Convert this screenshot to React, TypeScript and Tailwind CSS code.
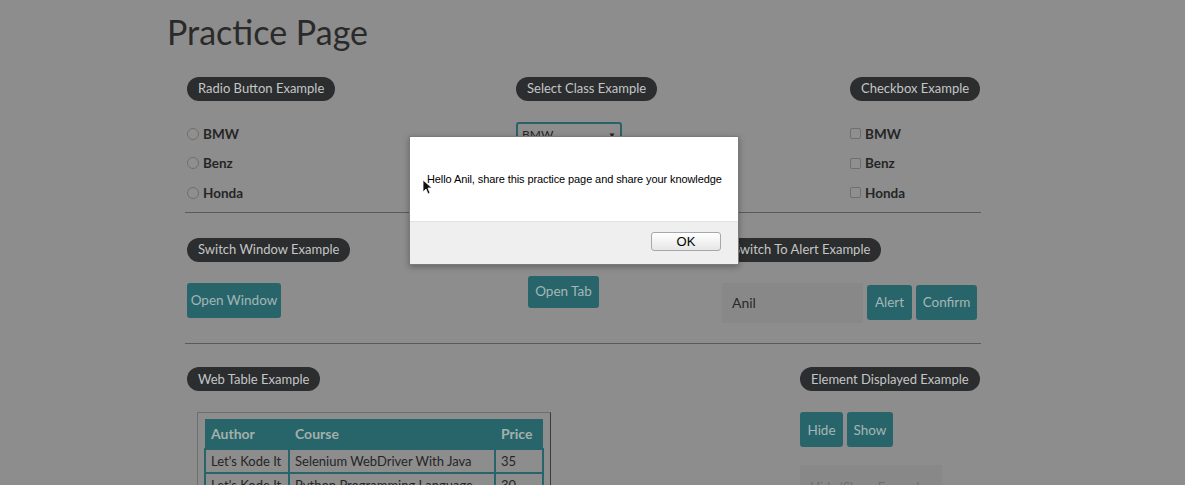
import React from "react";

function Legend({ children }: { children: React.ReactNode }) {
  return (
    <div className="inline-flex h-[24px] items-center whitespace-nowrap rounded-full bg-[#2b2d2f] px-[11px] text-[13px] text-[#c4c6c6]">
      {children}
    </div>
  );
}

function TealButton({ label, className }: { label: string; className: string }) {
  return (
    <div
      className={
        "flex items-center justify-center whitespace-nowrap rounded-[3px] bg-[#28656a] text-[13.5px] text-[#a4b6b6] " +
        className
      }
    >
      {label}
    </div>
  );
}

const cars = ["BMW", "Benz", "Honda"];

function App() {
  return (
    <div
      className="relative h-[485px] w-[1185px] overflow-hidden bg-[#8d8d8d] text-[#252525]"
      style={{ fontFamily: "Lato, 'Open Sans', sans-serif" }}
    >
      <h1 className="ml-[167px] pt-[10px] text-[34px] leading-[44px] text-[#2a2a2a]">
        Practice Page
      </h1>

      <div className="ml-[185px] w-[796px]">
        {/* row 1 */}
        <div className="flex pt-[21px] pb-[10px]">
          <div className="w-[331px] pl-[2px]">
            <Legend>Radio Button Example</Legend>
            <div className="mt-[24px] flex flex-col gap-[11.5px]">
              {cars.map((c) => (
                <div key={c} className="flex h-[18px] items-center gap-[4px]">
                  <span className="h-[12px] w-[12px] rounded-full border border-[#6f6f6f] bg-[#8f8f8f]" />
                  <span className="text-[13.5px] font-bold">{c}</span>
                </div>
              ))}
            </div>
          </div>
          <div className="w-[334px]">
            <Legend>Select Class Example</Legend>
            <div className="mt-[21px] flex h-[26px] w-[106px] items-center justify-between rounded-[3px] border-2 border-[#2b6266] px-[4px] text-[12px]">
              <span>BMW</span>
              <span className="text-[8px]">▼</span>
            </div>
          </div>
          <div className="flex-1">
            <Legend>Checkbox Example</Legend>
            <div className="mt-[24px] flex flex-col gap-[11.5px]">
              {cars.map((c) => (
                <div key={c} className="flex h-[18px] items-center gap-[4px]">
                  <span className="h-[11px] w-[11px] rounded-[2px] border border-[#6f6f6f] bg-[#8f8f8f]" />
                  <span className="text-[13.5px] font-bold">{c}</span>
                </div>
              ))}
            </div>
          </div>
        </div>
        <div className="h-px bg-[#5a5a5a]" />

        {/* row 2 */}
        <div className="flex pt-[23px] pb-[20px]">
          <div className="w-[343px] pl-[2px]">
            <Legend>Switch Window Example</Legend>
            <TealButton label="Open Window" className="mt-[21px] h-[35px] w-[94px]" />
          </div>
          <div className="w-[194px]">
            <Legend>Switch Tab Example</Legend>
            <TealButton label="Open Tab" className="mt-[14px] h-[32px] w-[71px]" />
          </div>
          <div className="flex-1">
            <Legend>Switch To Alert Example</Legend>
            <div className="mt-[21px] flex items-center gap-[4px]">
              <div className="flex h-[40px] w-[141px] items-center rounded-[2px] bg-[#888888] pl-[10px] text-[14px] text-[#2a2a2a]">
                Anil
              </div>
              <TealButton label="Alert" className="h-[35px] w-[45px]" />
              <TealButton label="Confirm" className="h-[35px] w-[61px]" />
            </div>
          </div>
        </div>
        <div className="h-px bg-[#5a5a5a]" />

        {/* row 3 */}
        <div className="flex pt-[22px]">
          <div className="w-[615px] pl-[2px]">
            <Legend>Web Table Example</Legend>
            <div className="ml-[10px] mt-[21px] w-[354px] border border-[#6e6e6e] border-r-[#3a3a3a] p-[6px]">
              <table className="w-full border-collapse text-[13px]">
                <thead>
                  <tr className="h-[30px] bg-[#28656a] text-left text-[14px] font-bold text-[#a3b0ab]">
                    <th className="w-[84px] pl-[6px]">Author</th>
                    <th className="pl-[6px]">Course</th>
                    <th className="w-[48px] pl-[6px]">Price</th>
                  </tr>
                </thead>
                <tbody>
                  <tr className="h-[24px]">
                    <td className="whitespace-nowrap border-2 border-[#28656a] pl-[5px]">Let's Kode It</td>
                    <td className="whitespace-nowrap border-2 border-[#28656a] pl-[5px]">Selenium WebDriver With Java</td>
                    <td className="border-2 border-[#28656a] pl-[5px]">35</td>
                  </tr>
                  <tr className="h-[24px]">
                    <td className="whitespace-nowrap border-2 border-[#28656a] pl-[5px]">Let's Kode It</td>
                    <td className="whitespace-nowrap border-2 border-[#28656a] pl-[5px]">Python Programming Language</td>
                    <td className="border-2 border-[#28656a] pl-[5px]">30</td>
                  </tr>
                </tbody>
              </table>
            </div>
          </div>
          <div className="flex-1">
            <Legend>Element Displayed Example</Legend>
            <div className="mt-[21px] flex gap-[4px]">
              <TealButton label="Hide" className="h-[35px] w-[43px]" />
              <TealButton label="Show" className="h-[35px] w-[46px]" />
            </div>
            <div className="mt-[18px] flex h-[40px] w-[142px] items-start whitespace-nowrap rounded-[2px] bg-[#888888] pl-[10px] pt-[13px] text-[13px] text-[#6e6e6e]">
              Hide/Show Example
            </div>
          </div>
        </div>
      </div>

      {/* alert dialog */}
      <div
        className="absolute left-[409px] top-[136px] w-[330px] border border-[#7a7a7a] bg-white shadow-[0_2px_6px_rgba(0,0,0,0.3)]"
        style={{ fontFamily: "'Liberation Sans', Arial, sans-serif" }}
      >
        <div className="h-[84px] whitespace-nowrap pl-[17px] pt-[34px] text-[11px] tracking-[-0.1px] text-black">
          Hello Anil, share this practice page and share your knowledge
        </div>
        <div className="flex h-[43px] items-start justify-end border-t border-[#e2e2e2] bg-[#efefef] pr-[17px] pt-[10px]">
          <div className="flex h-[19px] w-[70px] items-center justify-center rounded-[3px] border border-[#a8a8a8] bg-gradient-to-b from-white to-[#e6e6e6] text-[13px] text-black">
            OK
          </div>
        </div>
      </div>

      {/* cursor */}
      <svg className="absolute left-[422px] top-[179px]" width="10" height="16" viewBox="0 0 10 16">
        <path d="M1 1 L1 13 L4 10 L6 15 L8 14 L6 9 L10 9 Z" fill="#111" stroke="#fff" strokeWidth="0.8" />
      </svg>
    </div>
  );
}

export default App;
